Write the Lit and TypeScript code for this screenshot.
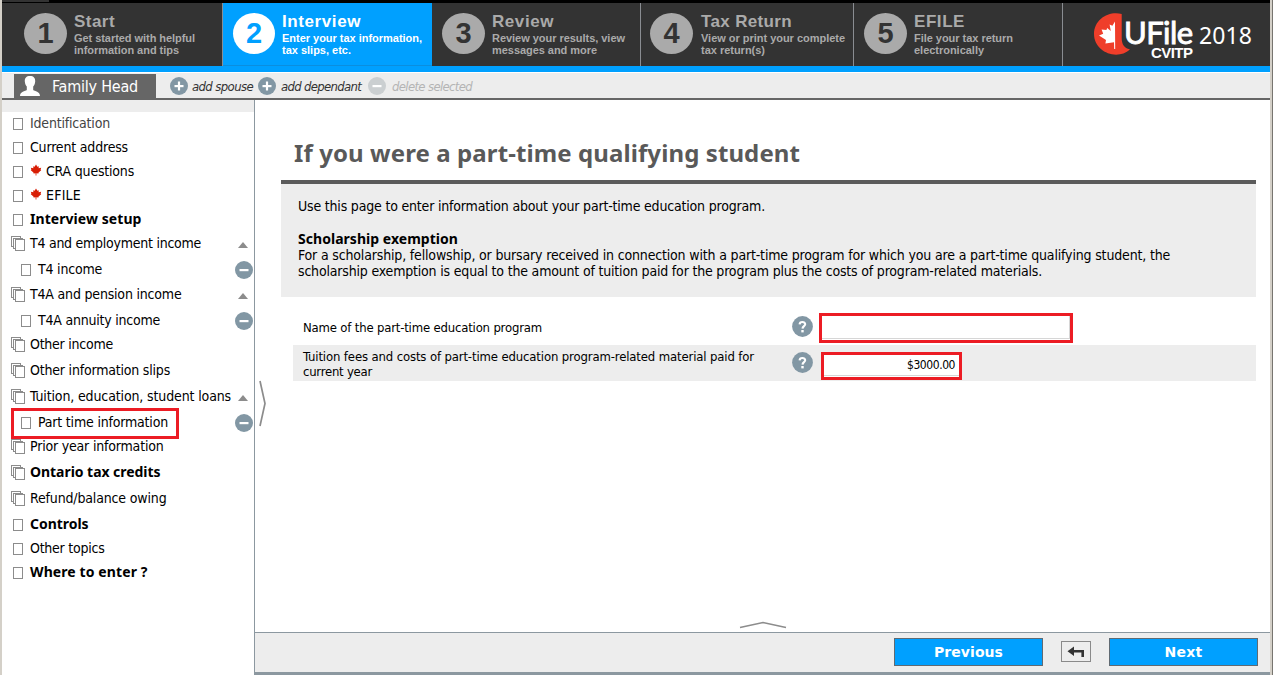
import { LitElement, html, svg, css, nothing } from "lit";
import { customElement } from "lit/decorators.js";
import { classMap } from "lit/directives/class-map.js";

const UI = '"DejaVu Sans Condensed"';
const BOLD = '"Noto Sans"';
const WIDE = '"DejaVu Sans"';
const ARIAL = '"Liberation Sans"';
const pen = document.createElement("canvas").getContext("2d")!;

// One line of text, tracked so that it is `width` pixels wide.
const fit = (text: string, width: number, font: string) => {
  pen.font = font;
  const ls = (width - pen.measureText(text).width) / text.length;
  return html`<span style="letter-spacing:${ls.toFixed(3)}px">${text}</span>`;
};

const steps = [
  { n: 1, title: "Start", tw: 41, lines: [["Get started with helpful", 121], ["information and tips", 105]] },
  { n: 2, title: "Interview", tw: 79, lines: [["Enter your tax information,", 140], ["tax slips, etc.", 69]] },
  { n: 3, title: "Review", tw: 62, lines: [["Review your results, view", 133], ["messages and more", 105]] },
  { n: 4, title: "Tax Return", tw: 91, lines: [["View or print your complete", 144], ["tax return(s)", 64]] },
  { n: 5, title: "EFILE", tw: 51, lines: [["File your tax return", 99], ["electronically", 70]] },
] as { n: number; title: string; tw: number; lines: [string, number][] }[];

type Item = { t: string; w: number; h: number; k?: "stack" | "sub"; b?: boolean; leaf?: boolean; open?: boolean; dim?: boolean; mark?: boolean };
const items: Item[] = [
  { t: "Identification", w: 80, h: 24, dim: true },
  { t: "Current address", w: 98, h: 24 },
  { t: "CRA questions", w: 88, h: 24, leaf: true },
  { t: "EFILE", w: 35, h: 24, leaf: true },
  { t: "Interview setup", w: 111.5, h: 24, b: true },
  { t: "T4 and employment income", w: 171, h: 26, k: "stack", open: true },
  { t: "T4 income", w: 64, h: 25, k: "sub" },
  { t: "T4A and pension income", w: 151.5, h: 26, k: "stack", open: true },
  { t: "T4A annuity income", w: 122, h: 24, k: "sub" },
  { t: "Other income", w: 83, h: 26, k: "stack" },
  { t: "Other information slips", w: 140, h: 26, k: "stack" },
  { t: "Tuition, education, student loans", w: 201, h: 26, k: "stack", open: true },
  { t: "Part time information", w: 130, h: 24, k: "sub", mark: true },
  { t: "Prior year information", w: 133.5, h: 26, k: "stack" },
  { t: "Ontario tax credits", w: 130.5, h: 26, k: "stack", b: true },
  { t: "Refund/balance owing", w: 136.5, h: 26, k: "stack" },
  { t: "Controls", w: 58.5, h: 24, b: true },
  { t: "Other topics", w: 74.5, h: 24 },
  { t: "Where to enter ?", w: 117.5, h: 24, b: true },
];

const page = html`<svg class="page" width="10" height="12"><rect x=".5" y=".5" width="9" height="11" fill="#fff" stroke="#8c8c8c" /></svg>`;
const stack = html`<svg class="stack" width="14" height="15"><g fill="#fff" stroke="#8c8c8c"><rect x=".5" y=".5" width="9" height="10" /><rect x="2.5" y="2.5" width="9" height="10" /><rect x="4.5" y="3.5" width="9" height="11" /></g></svg>`;
const leaf = html`<svg class="leaf" width="12" height="12" viewBox="0 0 12 12"><path fill="#d81e05" d="M6 .5 7.4 2.8 8.8 2.2 8.6 4.2 11.2 3.8 10.6 5.4 11.2 6.3 8.6 8.6 8.4 9.4 6.4 9.2V11.5H5.6V9.2L3.6 9.4 3.4 8.6.8 6.3 1.400 5.4.8 3.8 3.4 4.2 3.2 2.2 4.6 2.8Z" /></svg>`;
const disc = (plus: boolean, color = "#8297a4") => html`<svg class="disc" width="18" height="18" viewBox="0 0 18 18"><circle cx="9" cy="9" r="9" fill=${color} /><path fill="#fff" d="M4.5 8h9v2.2h-9z" />${plus ? svg`<path fill="#fff" d="M7.9 4.5h2.2v9H7.9z"/>` : nothing}</svg>`;
const help = html`<svg class="help" width="21" height="21" viewBox="0 0 21 21"><circle cx="10.5" cy="10.5" r="10.4" fill="#8297a4" /><path d="M7.6 8.4C7.7 5.2 13.3 5.3 13.2 8.3 13.1 10.1 10.6 10.2 10.5 12.6" fill="none" stroke="#fff" stroke-width="2.1" /><rect x="9.3" y="14" width="2.4" height="2.4" fill="#fff" /></svg>`;

@customElement("app-root")
export class AppRoot extends LitElement {
  static styles = css`
    :host { display: block; width: 1273px; height: 675px; overflow: hidden; background: #fff; color: #000; font: 14px "DejaVu Sans Condensed", "DejaVu Sans", sans-serif; }
    * { box-sizing: border-box; }
    svg { display: block; flex: none; }
    span { white-space: pre; }
    .frame { background: #77756f; height: 675px; }
    .window { display: flex; flex-direction: column; height: 675px; border-left: 2px solid #d4d0c8; border-right: 2px solid #d4d0c8; width: 1272px; background: #fff; }
    .top { height: 3px; background: #000; flex: none; }
    .top i { display: block; width: 47px; height: 2px; background: #333; }
    .steps { display: grid; grid-template-columns: 221px 209px 209px 213px 209px 1fr; height: 63px; background: #333; color: #aaa; font-family: "Liberation Sans", Arial, sans-serif; font-weight: 700; flex: none; }
    .step { display: flex; gap: 7px; padding: 10px 0 0 9px; border-right: 1px solid #8a8d92; }
    .step.first { padding-left: 22px; }
    .step.ten { padding-left: 10px; }
    .step.four { gap: 8px; }
    .step.on { background: #00a0ff; color: #fff; border-right: 0; border-bottom: 1px solid #0b8ede; }
    .num { width: 43px; height: 41px; border-radius: 50%; background: #aaa; color: #333; font-size: 29px; line-height: 40px; text-align: center; flex: none; }
    .on .num { background: #fff; color: #00a0ff; width: 42px; }
    .title { font-size: 17px; line-height: 18px; }
    .sub { font-size: 11px; line-height: 12px; padding-top: 1px; }
    .sub div { height: 12px; }
    .logo { margin-left: 25px; font-weight: 400; }
    .rule { height: 6px; background: #00a0ff; flex: none; }
    .bar { display: flex; align-items: center; height: 28px; border-top: 1px solid #fff; border-bottom: 2px solid #666; background: #ededed; padding-left: 12px; flex: none; }
    .tab { display: flex; align-items: center; gap: 12px; width: 142px; height: 24px; margin-top: 1px; background: #666; color: #fff; font-size: 16px; padding-left: 6px; }
    .act { display: flex; align-items: center; gap: 5px; font-size: 13px; font-style: italic; color: #333; margin: 1px 6px 0 0; }
    .act.a { margin-left: 14px; gap: 4px; margin-right: 5px; }
    .act.off { color: #b4b4b4; gap: 6px; margin-left: 1px; }
    .body { display: flex; flex: 1; min-height: 0; }
    .side { width: 253px; border-right: 1px solid #8c98a0; flex: none; }
    .side::before { content: ""; display: block; height: 12px; background: #ededed; }
    .item { position: relative; display: flex; line-height: 22px; padding-left: 11px; }
    .item > .page { margin: 6px 7px 0 0; }
    .item > .stack { margin: 4px 5px 0 -2px; }
    .item.sub2 { padding-left: 19px; }
    .item > .leaf { margin: 4px 4px 0 0; }
    .item.bold { font-weight: 700; font-family: "Noto Sans", sans-serif; }
    .item.dim { color: #444; }
    .end { margin-left: auto; }
    .end.tri { margin: 10px 6px 0 auto; }
    .item .disc { margin: 3px 1px 0 0; }
    .mark { position: absolute; left: 9px; top: -3px; width: 168px; height: 31px; border: 3px solid #ec1c24; z-index: 1; }
    .main { flex: 1; display: flex; flex-direction: column; min-width: 0; position: relative; }
    .grip { position: absolute; left: 3px; top: 280px; }
    h1 { margin: 38px 0 0 39px; font: 700 24px/30px "Noto Sans", sans-serif; height: 42px; color: #595959; }
    .intro { margin-left: 26px; width: 975px; height: 117px; border-top: 4px solid #5b5b5b; background: #ededed; padding: 14px 0 0 17px; line-height: 16px; }
    .intro div { height: 16px; }
    .intro .gap { height: 17px; }
    .intro b { display: block; height: 16px; font-family: "Noto Sans", sans-serif; }
    .row { display: flex; margin-left: 38px; width: 963px; height: 36px; padding-left: 10px; font-size: 13px; line-height: 15px; }
    .row.one { margin-top: 12px; }
    .row.two { background: #ededed; }
    .label { width: 489px; }
    .one .label { padding-top: 11px; }
    .two .label { padding-top: 4px; }
    .one .help { margin-top: 7px; }
    .two .help { margin-top: 7px; }
    .field { border: 3px solid #ec1c24; background: #fff; }
    .f1 { margin: 4px 0 0 6px; width: 254px; height: 30px; }
    .f2 { margin: 7px 0 0 8px; width: 141px; height: 28px; font-size: 12px; }
    .in { height: 23px; border-bottom: 1px solid #d6d6d6; border-right: 1px solid #d6d6d6; }
    .f2 .in { height: 21px; border-right: 0; text-align: right; line-height: 20px; padding-right: 4px; }
    .up { margin: auto 0 3px 484px; }
    .foot { display: flex; height: 43px; border-top: 1px solid #8c98a0; border-bottom: 3px solid #8c98a0; background: #ededed; flex: none; padding-left: 639px; }
    .btn { width: 149px; height: 28px; margin-top: 5px; background: #00a0ff; border: 1px solid #606a72; color: #fff; font: 700 14px/27px "DejaVu Sans", sans-serif; text-align: center; }
    .back { width: 30px; height: 21px; margin: 8px 18px 0; border: 1px solid #8a8a8a; }
  `;

  private step(s: (typeof steps)[number]) {
    const cls = { step: true, first: s.n === 1, on: s.n === 2, four: s.n === 4, ten: s.n === 2 || s.n === 3 || s.n === 5 };
    return html`<div class=${classMap(cls)}>
      <div class="num">${s.n}</div>
      <div><div class="title">${fit(s.title, s.tw, `700 17px ${ARIAL}`)}</div>
        <div class="sub">${s.lines.map(([t, w]) => html`<div>${fit(t, w, `700 11px ${ARIAL}`)}</div>`)}</div></div>
    </div>`;
  }

  private item(i: Item) {
    const cls = { item: true, sub2: i.k === "sub", bold: !!i.b, dim: !!i.dim };
    return html`<div class=${classMap(cls)} style="height:${i.h}px">
      ${i.k === "stack" ? stack : page}${i.leaf ? leaf : nothing}${fit(i.t, i.w, i.b ? `700 14px ${BOLD}` : `14px ${UI}`)}
      ${i.open ? html`<svg class="end tri" width="10" height="6"><path d="M5 0 10 6H0Z" fill="#8c8c8c" /></svg>` : nothing}
      ${i.k === "sub" ? html`<div class="end">${disc(false)}</div>` : nothing}
      ${i.mark ? html`<div class="mark"></div>` : nothing}
    </div>`;
  }

  render() {
    return html`<div class="frame"><div class="window">
      <div class="top"><i></i></div>
      <div class="steps">${steps.map((s) => this.step(s))}
        <svg class="logo" width="180" height="63" viewBox="1088 3 180 63">
          <path fill="#ef3e2a" d="M1121.7 13.9C1109 10.5 1094 19 1094 34 1094 52 1117 61 1130 49.5 1124 48 1121.7 44 1121.7 38Z" />
          <path fill="#fff" d="M1115 21.5 1112.4 25.8 1109.6 24.6 1110.8 31 1107.2 28 1106.4 30 1101.6 29.4 1103.2 33.8 1099 35.4 1106 40 1105.4 43.4 1114 42.2 1114.2 49H1115.2Z" />
          <g fill="#fff">
            <text x="1124" y="43.5" font-family="Lato" stroke="#fff" stroke-width=".9" font-size="31" textLength="69">UFile</text>
            <text x="1151" y="58" font-family="Liberation Sans" font-weight="700" font-size="15" textLength="42">CVITP</text>
            <text x="1199" y="43.5" font-family="Noto Sans" font-size="23" textLength="53">2018</text>
          </g>
        </svg>
      </div>
      <div class="rule"></div>
      <div class="bar">
        <div class="tab"><svg width="20" height="20" viewBox="0 0 20 20"><path fill="#fff" d="M10 0c3.600 0 5.400 2 5.200 5.400-.2 2.600-1.200 4-2 5.200v3.400c1.500 1.200 6.800 1.400 6.800 6H0c0-4.600 5.300-4.800 6.800-6v-3.400c-.8-1.200-1.800-2.600-2-5.200C4.600 2 6.400 0 10 0Z" /></svg>${fit("Family Head", 86, `16px ${UI}`)}</div>
        <div class="act a">${disc(true)}${fit("add spouse", 61, `italic 13px ${UI}`)}</div>
        <div class="act">${disc(true)}${fit("add dependant", 80, `italic 13px ${UI}`)}</div>
        <div class="act off">${disc(false, "#cbcfd1")}${fit("delete selected", 80, `italic 13px ${UI}`)}</div>
      </div>
      <div class="body">
        <div class="side">${items.map((i) => this.item(i))}</div>
        <div class="main">
          <svg class="grip" width="9" height="47"><path d="M2 1 7 23.500 2 46" fill="none" stroke="#8c8c8c" stroke-width="1.700" /></svg>
          <h1>${fit("If you were a part-time qualifying student", 506, `700 24px ${BOLD}`)}</h1>
          <div class="intro">
            <div>${fit("Use this page to enter information about your part-time education program.", 467, `14px ${UI}`)}</div>
            <div class="gap"></div>
            <b>${fit("Scholarship exemption", 160, `700 14px ${BOLD}`)}</b>
            <div>${fit("For a scholarship, fellowship, or bursary received in connection with a part-time program for which you are a part-time qualifying student, the", 872, `14px ${UI}`)}</div>
            <div>${fit("scholarship exemption is equal to the amount of tuition paid for the program plus the costs of program-related materials.", 744, `14px ${UI}`)}</div>
          </div>
          <div class="row one"><div class="label">${fit("Name of the part-time education program", 239, `13px ${UI}`)}</div>${help}<div class="field f1"><div class="in"></div></div></div>
          <div class="row two"><div class="label">${fit("Tuition fees and costs of part-time education program-related material paid for", 451, `13px ${UI}`)}<br />${fit("current year", 69, `13px ${UI}`)}</div>${help}<div class="field f2"><div class="in">${fit("$3000.00", 48, `12px ${UI}`)}</div></div></div>
          <svg class="up" width="48" height="8"><path d="M1 6.500 24 1.500 47 6.500" fill="none" stroke="#8c8c8c" stroke-width="1.600" /></svg>
          <div class="foot">
            <div class="btn">${fit("Previous", 69, `700 14px ${WIDE}`)}</div>
            <div class="back"><svg width="28" height="19" viewBox="0 0 28 19"><path fill="#333" d="M5.500 9.200 12 4.500V8h10v7h-2.600v-4.400H12V14Z" /></svg></div>
            <div class="btn">${fit("Next", 38, `700 14px ${WIDE}`)}</div>
          </div>
        </div>
      </div>
    </div></div>`;
  }
}
